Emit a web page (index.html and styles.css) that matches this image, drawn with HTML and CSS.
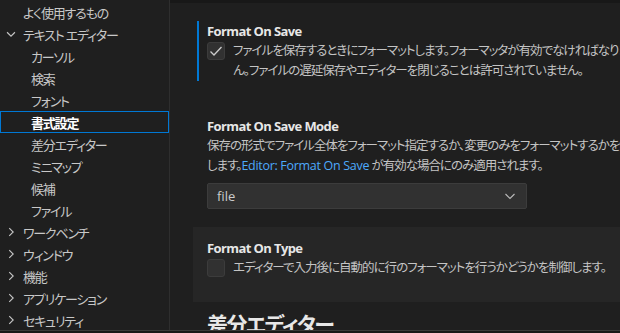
FILE: index.html
```html
<!DOCTYPE html>
<html lang="ja">
<head>
  <meta charset="UTF-8">
  <title>設定 - 書式設定</title>
  <link rel="stylesheet" href="styles.css">
</head>
<body>
  <div class="window">
    <div class="panes">
      <nav class="toc">
        <div class="toc-row">よく使用するもの</div>
        <div class="toc-row">
          <svg class="chev" viewBox="0 0 16 16"><path d="M3.5 6l4.5 4.5 4.5-4.5"/></svg>
          テキスト エディター
        </div>
        <div class="toc-row child">カーソル</div>
        <div class="toc-row child">検索</div>
        <div class="toc-row child">フォント</div>
        <div class="toc-row child selected">書式設定</div>
        <div class="toc-row child">差分エディター</div>
        <div class="toc-row child">ミニマップ</div>
        <div class="toc-row child">候補</div>
        <div class="toc-row child">ファイル</div>
        <div class="toc-row">
          <svg class="chev" viewBox="0 0 16 16"><path d="M6 3.5l4.5 4.5-4.5 4.5"/></svg>
          ワークベンチ
        </div>
        <div class="toc-row">
          <svg class="chev" viewBox="0 0 16 16"><path d="M6 3.5l4.5 4.5-4.5 4.5"/></svg>
          ウィンドウ
        </div>
        <div class="toc-row">
          <svg class="chev" viewBox="0 0 16 16"><path d="M6 3.5l4.5 4.5-4.5 4.5"/></svg>
          機能
        </div>
        <div class="toc-row">
          <svg class="chev" viewBox="0 0 16 16"><path d="M6 3.5l4.5 4.5-4.5 4.5"/></svg>
          アプリケーション
        </div>
        <div class="toc-row">
          <svg class="chev" viewBox="0 0 16 16"><path d="M6 3.5l4.5 4.5-4.5 4.5"/></svg>
          セキュリティ
        </div>
      </nav>

      <main class="settings">
        <div class="setting first">
          <div class="setting-body focused">
            <div class="setting-title">Format On Save</div>
            <div class="check-row">
              <span class="checkbox">
                <svg viewBox="0 0 16 16"><path d="M2.5 8.5l3.5 3.5 7.5-8"/></svg>
              </span>
              <div class="desc">ファイルを保存するときにフォーマットします。フォーマッタが有効でなければなりませ<br>ん。ファイルの遅延保存やエディターを閉じることは許可されていません。</div>
            </div>
          </div>
        </div>

        <div class="setting second">
          <div class="setting-body">
            <div class="setting-title">Format On Save Mode</div>
            <div class="desc">保存の形式でファイル全体をフォーマット指定するか、変更のみをフォーマットするかを制御<br>します。<a class="link">Editor: Format On Save</a> が有効な場合にのみ適用されます。</div>
            <div class="select">
              <span>file</span>
              <svg viewBox="0 0 16 16"><path d="M3.5 6l4.5 4.5 4.5-4.5"/></svg>
            </div>
          </div>
        </div>

        <div class="setting hovered">
          <div class="setting-body">
            <div class="setting-title">Format On Type</div>
            <div class="check-row">
              <span class="checkbox"></span>
              <div class="desc">エディターで入力後に自動的に行のフォーマットを行うかどうかを制御します。</div>
            </div>
          </div>
        </div>

        <h2 class="group-title">差分エディター</h2>
      </main>
    </div>
    <div class="statusline"></div>
  </div>
</body>
</html>
```

FILE: styles.css
```css
body {
  margin: 0;
  background: #1f1f1f;
  color: #cccccc;
  font-family: "Open Sans", "Noto Sans CJK JP", sans-serif;
  font-size: 13px;
  font-feature-settings: "palt";
  overflow: hidden;
}
.window {
  width: 620px;
  height: 333px;
  display: flex;
  flex-direction: column;
}
.panes {
  flex: 1;
  display: flex;
  min-height: 0;
}
.statusline {
  height: 2px;
  border-top: 1px solid #3a3a3a;
  background: #181818;
}

/* table of contents */
.toc {
  width: 169px;
  flex-shrink: 0;
  border-right: 1px solid #2e2e2e;
  padding-top: 1px;
}
.toc-row {
  height: 22px;
  box-sizing: border-box;
  display: flex;
  align-items: center;
  padding-left: 23px;
  color: #c8c8c8;
  white-space: nowrap;
  letter-spacing: -1.2px;
  position: relative;
}
.toc-row .chev {
  position: absolute;
  left: 4px;
  top: 4px;
  width: 14px;
  height: 14px;
  fill: none;
  stroke: #c5c5c5;
  stroke-width: 1.3;
}
.toc-row.child {
  padding-left: 31px;
}
.toc-row.selected {
  border: 1px solid #0078d4;
  color: #ffffff;
  font-weight: bold;
  padding-left: 30px;
}

/* settings list */
.settings {
  flex: 1;
  min-width: 0;
  border-top: 3px solid #181818;
  padding: 7px 0 0 23px;
  overflow: hidden;
}
.setting {
  padding: 11px 0 24px 4px;
}
.setting.second {
  padding-bottom: 18px;
}
.setting.hovered {
  background: #262626;
}
.setting-body {
  border-left: 2px solid transparent;
  padding-left: 8px;
}
.setting-body.focused {
  border-left-color: #0078d4;
}
.setting-title {
  font-weight: bold;
  color: #e7e7e7;
  line-height: 20px;
  letter-spacing: -0.6px;
}
.desc {
  font-size: 12.5px;
  line-height: 20px;
  white-space: nowrap;
  color: #c4c4c4;
  letter-spacing: -1px;
}
.link {
  color: #4daafc;
  letter-spacing: -0.3px;
}
.check-row {
  display: flex;
  gap: 8px;
}
.checkbox {
  width: 16px;
  height: 16px;
  margin-top: 1px;
  flex-shrink: 0;
  background: #313131;
  border: 1px solid #3c3c3c;
  border-radius: 3px;
}
.checkbox svg {
  width: 16px;
  height: 16px;
  fill: none;
  stroke: #cccccc;
  stroke-width: 1.3;
}
.select {
  width: 301px;
  height: 24px;
  margin-top: 7px;
  background: #313131;
  border: 1px solid #3c3c3c;
  border-radius: 2px;
  display: flex;
  align-items: center;
  justify-content: space-between;
  padding: 0 8px 0 9px;
  color: #cccccc;
}
.select svg {
  width: 16px;
  height: 16px;
  fill: none;
  stroke: #bbbbbb;
  stroke-width: 1.1;
}
.group-title {
  margin: 6px 0 0 14px;
  font-size: 21px;
  font-weight: bold;
  color: #e7e7e7;
  line-height: 32px;
  letter-spacing: -1.5px;
}
```
